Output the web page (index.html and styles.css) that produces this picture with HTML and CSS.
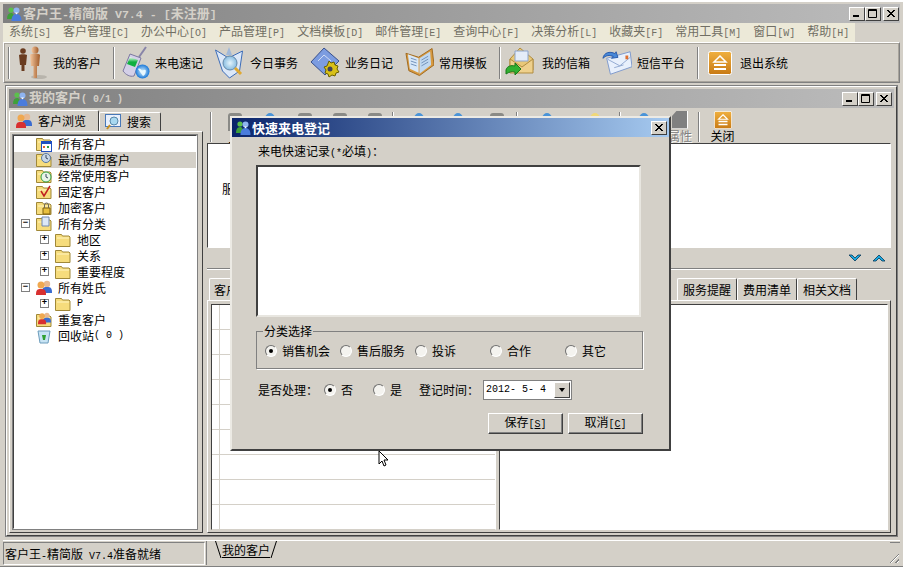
FILE: index.html
```html
<!DOCTYPE html>
<html lang="zh-CN">
<head>
    <meta charset="UTF-8">
    <title>客户王-精简版</title>
    <link rel="stylesheet" href="styles.css">
</head>
<body>
<svg class="sprite" xmlns="http://www.w3.org/2000/svg">
    <defs>
        <linearGradient id="bronze" x1="0" x2="1"><stop offset="0" stop-color="#f4c8a0"/><stop offset="1" stop-color="#a05a28"/></linearGradient>
        <linearGradient id="exitg" x1="0" x2="0" y1="0" y2="1"><stop offset="0" stop-color="#f0b040"/><stop offset="1" stop-color="#c87a14"/></linearGradient>
        <linearGradient id="lcd" x1="0" x2="0" y1="0" y2="1"><stop offset="0" stop-color="#f0fff0"/><stop offset="0.500" stop-color="#10b040"/></linearGradient>
        <radialGradient id="globe"><stop offset="0" stop-color="#d8f4ff"/><stop offset="1" stop-color="#1a78d8"/></radialGradient>
        <radialGradient id="lens"><stop offset="0" stop-color="#e4f4fc"/><stop offset="1" stop-color="#88bce0"/></radialGradient>
    </defs>
    <symbol id="msn" viewBox="0 0 16 16">
        <circle cx="5" cy="4" r="2.600" fill="#5cc04c"/><path d="M1 13c0-4 1.500-6 4-6s3 2 3 6z" fill="#3ea03a"/>
        <circle cx="10.500" cy="4.500" r="3" fill="#8fb4f0"/><path d="M5.500 15c0-5 2-7 5-7s5 2 5 7z" fill="#4a7cdc"/>
        <path d="M9 6.500h3l-1.500 2z" fill="#fff"/>
    </symbol>
    <symbol id="figures" viewBox="0 0 32 34">
        <ellipse cx="23" cy="31" rx="8" ry="2" fill="#b8b4ac"/>
        <circle cx="7" cy="5" r="2.800" fill="#6a3c20"/><path d="M3 9c1-1 7-1 8 0l-1 10H8.500v6h-3v-6H4z" fill="#6a3c20"/>
        <circle cx="19" cy="4" r="3.500" fill="url(#bronze)"/><path d="M14 9c1-2 9-2 10 0l-1 11h-2v12h-3.500V20h-2.500z" fill="url(#bronze)"/>
    </symbol>
    <symbol id="phone" viewBox="0 0 28 32">
        <path d="M1 24 8 7l11 4-7 18c-4 1-8-1-11-5z" fill="#d4d0e8" stroke="#7c78a0"/><path d="M8 10l8 3-3 7-8-3z" fill="url(#lcd)"/>
        <path d="M17 10l7-10" stroke="#8884a8" stroke-width="2"/>
        <circle cx="20.500" cy="24.500" r="7" fill="url(#globe)"/><path d="M16 22c3-2 3 3 6 1s2 5-1 6" fill="#e8f8ff"/>
    </symbol>
    <symbol id="task" viewBox="0 0 30 32">
        <path d="M0.500 3l13 8 14-7-3 20-10 7-7-7z" fill="#dce8f8" stroke="#3c6cb8"/>
        <path d="M14 0l3 8h-6z" fill="#a0b8d8"/>
        <circle cx="15" cy="16" r="7" fill="url(#lens)" stroke="#6488a8"/>
        <path d="M20 21l6 6" stroke="#e0a830" stroke-width="3"/>
    </symbol>
    <symbol id="diary" viewBox="0 0 30 32">
        <path d="M1 15 14 1l15 13-14 14z" fill="#7c9ce0" stroke="#38508c"/>
        <path d="M8 14l6-6 7 6" fill="none" stroke="#d0dcf4"/>
        <path d="M19 14l2 2 3-1 1 3 3 1-1 3 2 3-3 1-1 3-3-1-3 2-1-3-3-1 1-3-2-3 3-1z" fill="#d8c018" stroke="#6a6000"/>
        <circle cx="20" cy="22" r="2.500" fill="#445"/>
    </symbol>
    <symbol id="book" viewBox="0 0 30 30">
        <path d="M1 5l13 4 14-9 2 17-15 11L4 23z" fill="#d89a40" stroke="#a06a20"/>
        <path d="M3 6l11 4v15L5 21z" fill="#d8e8f8"/><path d="M15 10 26 3l1 14-12 9z" fill="#c0d8f0"/>
        <path d="M6 10l6 2M6 13l6 2M6 16l6 2M17 12l7-4M17 15l7-4M17 18l7-4" stroke="#7090b8"/>
    </symbol>
    <symbol id="mailin" viewBox="0 0 32 32">
        <path d="M5 12 15 1l13 11v11H5z" fill="#e8c878" stroke="#b08c40"/>
        <path d="M10 4h13v10H10z" fill="#e4ecf8" stroke="#8ca4cc"/>
        <path d="M5 12l12 8 11-8v14H5z" fill="#eed08c" stroke="#b08c40"/>
        <path d="M1 23c1-4 5-5 9-4v-3l6 6-6 6v-3c-3-1-6 0-9 2z" fill="#30b030" stroke="#187818"/>
    </symbol>
    <symbol id="mailout" viewBox="0 0 32 28">
        <path d="M5 9l25-7 2 16-23 8z" fill="#e8f0fc" stroke="#7c98cc"/>
        <path d="M6 10l13 7 11-9M13 19l10-3" fill="none" stroke="#90a8d0"/>
        <path d="M25 6h3v4h-3z" fill="#e07030"/>
        <path d="M1 9c1-6 7-8 13-5l1-2 2 6-7 1 2-2c-4-2-8-1-11 2z" fill="#4888d8" stroke="#2858a8"/>
    </symbol>
    <symbol id="exit" viewBox="0 0 24 24">
        <rect x="0.500" y="0.500" width="23" height="23" rx="2" fill="url(#exitg)" stroke="#fff"/>
        <path d="M12 5l6 6H6z" fill="none" stroke="#fff" stroke-width="1.500"/><path d="M6 14h12M6 18h12" stroke="#fff" stroke-width="2"/>
    </symbol>
    <symbol id="folder" viewBox="0 0 16 16">
        <path d="M0.500 4V2.500h6l1 1.500h6.500l1 1v9.500H0.500z" fill="#f6dc7c" stroke="#a08838"/><path d="M2 6h12" stroke="#fff4c0"/>
    </symbol>
    <symbol id="people" viewBox="0 0 16 16">
        <circle cx="11" cy="4" r="3.200" fill="#e8b890"/><path d="M6 13c0-5 1-6 5-6s5 1 5 6z" fill="#3a6cd0"/>
        <circle cx="5" cy="5" r="3.500" fill="#f0a850"/><path d="M0 15c0-5 1-6 5-6s5 1 5 6z" fill="#d83030"/>
    </symbol>
    <symbol id="bin" viewBox="0 0 16 16">
        <path d="M2 3h12l-2 12H4z" fill="#c8e4f4" stroke="#6c9cbc"/><path d="M6 7h4l-1 5H7z" fill="#30a030"/>
    </symbol>
    <symbol id="magnify" viewBox="0 0 16 16">
        <rect x="0.500" y="0.500" width="15" height="12" fill="#e8f0fc" stroke="#4878b8"/>
        <circle cx="9" cy="7" r="4" fill="#a8d8f0" stroke="#5888a8"/><path d="M5 11l-3 4" stroke="#c89020" stroke-width="2"/>
    </symbol>
    <symbol id="min" viewBox="0 0 10 9"><path d="M1 6h6v2H1z"/></symbol>
    <symbol id="max" viewBox="0 0 10 9"><path d="M0.500 0.500h8v8h-8zM1 1.500h7" fill="none" stroke="#000"/></symbol>
    <symbol id="close" viewBox="0 0 10 9"><path d="M1 1l7 7M2 1l7 7M8 1 1 8M9 1 2 8" stroke="#000" fill="none"/></symbol>
</svg>

<div class="app">
    <div class="titlebar">
        <svg class="title-icon"><use href="#msn"/></svg>
        <span class="title-text">客户王<i class="lat">-</i>精简版<i class="lat"> V7.4 - [</i>未注册<i class="lat">]</i></span>
        <div class="win-btns">
            <span class="win-btn"><svg><use href="#min"/></svg></span>
            <span class="win-btn"><svg><use href="#max"/></svg></span>
            <span class="win-btn gap"><svg><use href="#close"/></svg></span>
        </div>
    </div>

    <div class="menubar">
        <span class="menu-item">系统<i class="lat">[S]</i></span>
        <span class="menu-item">客户管理<i class="lat">[C]</i></span>
        <span class="menu-item">办公中心<i class="lat">[O]</i></span>
        <span class="menu-item">产品管理<i class="lat">[P]</i></span>
        <span class="menu-item">文档模板<i class="lat">[D]</i></span>
        <span class="menu-item">邮件管理<i class="lat">[E]</i></span>
        <span class="menu-item">查询中心<i class="lat">[F]</i></span>
        <span class="menu-item">决策分析<i class="lat">[L]</i></span>
        <span class="menu-item">收藏夹<i class="lat">[F]</i></span>
        <span class="menu-item">常用工具<i class="lat">[M]</i></span>
        <span class="menu-item">窗口<i class="lat">[W]</i></span>
        <span class="menu-item">帮助<i class="lat">[H]</i></span>
    </div>

    <div class="toolbar">
        <span class="sep grip"></span>
        <div class="tool"><svg class="w32"><use href="#figures"/></svg>我的客户</div>
        <span class="sep"></span>
        <div class="tool"><svg class="w28"><use href="#phone"/></svg>来电速记</div>
        <div class="tool"><svg class="w30"><use href="#task"/></svg>今日事务</div>
        <div class="tool"><svg class="w30"><use href="#diary"/></svg>业务日记</div>
        <div class="tool"><svg class="w29"><use href="#book"/></svg>常用模板</div>
        <span class="sep sep-tight"></span>
        <div class="tool"><svg class="w32"><use href="#mailin"/></svg>我的信箱</div>
        <div class="tool"><svg class="w30"><use href="#mailout"/></svg>短信平台</div>
        <span class="sep sep-wide"></span>
        <div class="tool tool-exit"><svg class="w24"><use href="#exit"/></svg>退出系统</div>
    </div>

    <div class="child">
        <div class="titlebar child-title">
            <svg class="title-icon"><use href="#msn"/></svg>
            <span class="title-text">我的客户<i class="lat">( 0/1 )</i></span>
            <div class="win-btns">
                <span class="win-btn"><svg><use href="#min"/></svg></span>
                <span class="win-btn"><svg><use href="#max"/></svg></span>
                <span class="win-btn gap"><svg><use href="#close"/></svg></span>
            </div>
        </div>

        <div class="child-body">
            <div class="left">
                <div class="tabs">
                    <span class="tab active"><svg class="tab-icon"><use href="#people"/></svg>客户浏览</span>
                    <span class="tab"><svg class="tab-icon"><use href="#magnify"/></svg>搜索</span>
                </div>
                <div class="tab-page">
                    <div class="tree">
                        <div class="row"><span class="twisty none"></span><svg class="node"><use href="#folder"/><rect x="5.500" y="5.500" width="10" height="10" fill="#fff" stroke="#2050c0"/><path d="M6 6h9v2H6z" fill="#2050c0"/><path d="M7 10h2v2H7z" fill="#e06030"/><path d="M11 10h2v2h-2z" fill="#30a040"/></svg>所有客户</div>
                        <div class="row selected"><span class="twisty none"></span><svg class="node"><use href="#folder"/><circle cx="10" cy="6" r="4.500" fill="#c8d8e8" stroke="#5878a0"/><path d="M10 3v3l2 1" fill="none" stroke="#384860"/></svg>最近使用客户</div>
                        <div class="row"><span class="twisty none"></span><svg class="node"><use href="#folder"/><circle cx="10" cy="9" r="5" fill="#e8f4e8" stroke="#30a040"/><path d="M10 6v3l2 1" fill="none" stroke="#384860"/></svg>经常使用客户</div>
                        <div class="row"><span class="twisty none"></span><svg class="node"><use href="#folder"/><path d="M5 7l3 5 6-10" fill="none" stroke="#c02020" stroke-width="1.500"/></svg>固定客户</div>
                        <div class="row"><span class="twisty none"></span><svg class="node"><use href="#folder"/><path d="M7 8h7v6H7z" fill="#e8c040" stroke="#806010"/><path d="M8.500 8V5a2 2 0 0 1 4 0v3" fill="none" stroke="#706858"/></svg>加密客户</div>
                        <div class="row"><span class="twisty">−</span><svg class="node"><use href="#folder"/><path d="M6 1h7v9H6z" fill="#dce8f8" stroke="#7088b0"/></svg>所有分类</div>
                        <div class="row sub"><span class="twisty">+</span><svg class="node"><use href="#folder"/></svg>地区</div>
                        <div class="row sub"><span class="twisty">+</span><svg class="node"><use href="#folder"/></svg>关系</div>
                        <div class="row sub"><span class="twisty">+</span><svg class="node"><use href="#folder"/></svg>重要程度</div>
                        <div class="row"><span class="twisty">−</span><svg class="node"><use href="#people"/></svg>所有姓氏</div>
                        <div class="row sub"><span class="twisty">+</span><svg class="node"><use href="#folder"/></svg><i class="lat">P</i></div>
                        <div class="row"><span class="twisty none"></span><svg class="node"><use href="#folder"/><use href="#people" x="2" y="0" width="13" height="13"/></svg>重复客户</div>
                        <div class="row"><span class="twisty none"></span><svg class="node"><use href="#bin"/></svg>回收站<i class="lat">( 0 )</i></div>
                    </div>
                </div>
            </div>

            <div class="right">
                <div class="subtoolbar">
                    <span class="sep grip"></span>
                    <span class="subtool"><i class="mini mini-grey"></i>上</span>
                    <span class="subtool"><i class="mini mini-blue"></i></span>
                    <span class="subtool"><i class="mini mini-grey"></i></span>
                    <span class="subtool"><i class="mini mini-grey"></i></span>
                    <span class="subtool"><i class="mini mini-grey"></i></span>
                    <span class="sep"></span>
                    <span class="subtool w40"><i class="mini mini-blue"></i></span>
                    <span class="subtool w40"><i class="mini mini-blue"></i></span>
                    <span class="subtool w40"><i class="mini mini-grey"></i></span>
                    <span class="sep"></span>
                    <span class="subtool w48"><i class="mini mini-blue"></i></span>
                    <span class="subtool w48"><i class="mini mini-yellow"></i></span>
                    <span class="sep"></span>
                    <span class="subtool w37"><i class="mini mini-blue"></i></span>
                    <span class="subtool w37 disabled"><i class="mini mini-doc"></i>属性</span>
                    <span class="sep"></span>
                    <span class="subtool"><svg class="mini-exit"><use href="#exit"/></svg>关闭</span>
                </div>

                <div class="info-pane">服务</div>

                <div class="collapse-bar">
                    <svg class="chevron" viewBox="0 0 14 8"><path d="M1 1h3l3 3 3-3h3L7 7z" fill="#18a8e0" stroke="#083858" stroke-width="0.800"/></svg>
                    <svg class="chevron" viewBox="0 0 14 8"><path d="M1 7h3l3-3 3 3h3L7 1z" fill="#18a8e0" stroke="#083858" stroke-width="0.800"/></svg>
                </div>

                <div class="tabs lower-tabs">
                    <span class="tab active first">客户</span>
                    <span class="tabs-fill"></span>
                    <span class="tab">服务提醒</span>
                    <span class="tab">费用清单</span>
                    <span class="tab">相关文档</span>
                </div>
                <div class="lower-page">
                    <div class="grid"></div>
                    <div class="detail"></div>
                </div>
            </div>
        </div>
    </div>

    <div class="statusbar">
        <div class="status-text">客户王<i class="lat">-</i>精简版<i class="lat"> V7.4</i>准备就绪</div>
        <div class="status-tabs">
            <div class="mdi-tab">
                <svg class="slash" viewBox="0 0 7 17"><path d="M0.500 0 6 17" stroke="#000" fill="none"/></svg>
                <span class="mdi-label">我的客户</span>
                <svg class="slash" viewBox="0 0 7 17"><path d="M6.500 0 1 17" stroke="#000" fill="none"/></svg>
            </div>
            <span class="size-grip"></span>
        </div>
    </div>
</div>

<div class="dialog">
    <div class="dialog-title">
        <svg class="title-icon"><use href="#msn"/></svg>
        <span class="title-text">快速来电登记</span>
        <span class="win-btn"><svg><use href="#close"/></svg></span>
    </div>
    <div class="dialog-body">
        <div class="field-label">来电快速记录<i class="lat">(*</i>必填<i class="lat">)</i>：</div>
        <textarea class="memo"></textarea>
        <fieldset class="group">
            <legend>分类选择</legend>
            <div class="radio-row">
                <label class="radio-item"><span class="radio on"></span>销售机会</label>
                <label class="radio-item"><span class="radio"></span>售后服务</label>
                <label class="radio-item"><span class="radio"></span>投诉</label>
                <label class="radio-item"><span class="radio"></span>合作</label>
                <label class="radio-item"><span class="radio"></span>其它</label>
            </div>
        </fieldset>
        <div class="state-row">
            <span class="state-label">是否处理：</span>
            <label class="radio-item no"><span class="radio on"></span>否</label>
            <label class="radio-item yes"><span class="radio"></span>是</label>
            <span class="state-label">登记时间：</span>
            <div class="combo">
                <span class="combo-value">2012- 5- 4</span>
                <span class="combo-btn"></span>
            </div>
        </div>
        <div class="actions">
            <button class="btn">保存<i class="lat">[<u>S</u>]</i></button>
            <button class="btn">取消<i class="lat">[<u>C</u>]</i></button>
        </div>
    </div>
</div>

<svg class="cursor" viewBox="0 0 12 18">
    <path d="M1 1v13l3-3 2 5 2-1-2-5h4z" fill="#fff" stroke="#000"/>
</svg>
</body>
</html>
```

FILE: styles.css
```css
* {
    box-sizing: border-box;
}
html, body {
    margin: 0;
    height: 100%;
    overflow: hidden;
}
body {
    position: relative;
    font: 12px/16px "Noto Sans CJK SC", sans-serif;
    color: #000;
    background-color: #d4d0c8;
}
i {
    font-style: normal;
}
.lat {
    font-family: "Liberation Mono", monospace;
    font-size: 10px;
    white-space: pre;
}
.sprite {
    position: absolute;
    width: 0;
    height: 0;
}

.app {
    width: 903px;
    height: 567px;
    padding: 2px 3px 1px;
    display: flex;
    flex-direction: column;
    background-color: #d4d0c8;
    border-top: 2px solid #fff;
    border-bottom: 1px solid #808080;
}

/* title bars */
.titlebar {
    height: 19px;
    flex: none;
    display: flex;
    align-items: center;
    padding-left: 3px;
    background: linear-gradient(to right, #808080, #bcbcbc);
    color: #d4d0c8;
}
.title-icon {
    width: 16px;
    height: 16px;
    margin-right: 1px;
    flex: none;
}
.title-text {
    font-size: 13px;
    font-weight: 700;
    white-space: pre;
}
.title-text .lat {
    font-size: 11.600px;
    font-weight: 700;
}
.win-btns {
    margin-left: auto;
    display: flex;
    padding-right: 1px;
}
.win-btn {
    width: 16px;
    height: 14px;
    display: flex;
    align-items: center;
    justify-content: center;
    background-color: #d4d0c8;
    border: 1px solid;
    border-color: #fff #404040 #404040 #fff;
}
.win-btn.gap {
    margin-left: 2px;
}
.win-btn svg {
    width: 10px;
    height: 9px;
}

/* menu */
.menubar {
    height: 19px;
    flex: none;
    display: flex;
    align-items: center;
    width: 852px;
    background-color: #ece9d8;
    color: #716f64;
}
.menu-item {
    padding: 0 6px;
    white-space: nowrap;
}

/* main toolbar */
.toolbar {
    height: 41px;
    flex: none;
    display: flex;
    align-items: center;
    padding-left: 4px;
    border: 1px solid;
    border-color: #fff #808080 #808080 #fff;
    box-shadow: 0 0 0 1px #a8a49c inset;
}
.sep {
    width: 2px;
    height: 32px;
    flex: none;
    border-left: 1px solid #808080;
    border-right: 1px solid #fff;
    margin-right: 7px;
}
.sep.grip {
    margin-right: 6px;
}
.sep.sep-tight {
    margin-right: 4px;
}
.sep.sep-wide {
    margin-right: 9px;
}
.tool {
    display: flex;
    align-items: center;
    gap: 5px;
    margin-right: 12px;
    white-space: nowrap;
}
.tool svg {
    height: 34px;
    flex: none;
}
.tool-exit {
    gap: 8px;
}
.w24 { width: 24px; }
.tool svg.w24 { height: 24px; }
.w28 { width: 28px; }
.w29 { width: 29px; }
.w30 { width: 30px; }
.w32 { width: 32px; }

/* child window */
.child {
    flex: 1;
    min-height: 0;
    margin: 3px 3px 4px;
    padding: 2px;
    display: flex;
    flex-direction: column;
    border: 1px solid #404040;
    border-top-color: #fff;
    border-left-color: #fff;
    box-shadow: 0 0 0 1px #808080;
}
.child-title {
    height: 19px;
}
.child-title .win-btns {
    padding-right: 2px;
}
.child-title .lat {
    font-size: 10px;
}
.child-body {
    flex: 1;
    min-height: 0;
    display: flex;
    padding-top: 2px;
}

/* left panel */
.left {
    width: 194px;
    flex: none;
    display: flex;
    flex-direction: column;
}
.tabs {
    height: 21px;
    flex: none;
    display: flex;
    align-items: flex-end;
}
.tab {
    height: 19px;
    display: flex;
    align-items: center;
    justify-content: center;
    white-space: nowrap;
    border: 1px solid;
    border-bottom: 0;
    border-color: #fff #404040 transparent #fff;
    border-radius: 2px 2px 0 0;
}
.left .tab {
    width: 62px;
    gap: 6px;
    justify-content: flex-start;
    padding-left: 5px;
}
.left .tab.active {
    width: 90px;
    height: 21px;
    padding-left: 6px;
}
.tab-icon {
    width: 16px;
    height: 16px;
}
.tab-page {
    flex: 1;
    min-height: 0;
    padding: 3px 5px 3px 3px;
    border: 1px solid;
    border-color: #fff #404040 #404040 #fff;
}
.tree {
    height: 100%;
    background-color: #fff;
    border: 1px solid;
    border-color: #404040 #fff #fff #404040;
    outline: 1px solid #808080;
}
.row {
    height: 16px;
    display: flex;
    align-items: center;
    padding: 0 0 1px 7px;
    white-space: nowrap;
}
.row.sub {
    padding-left: 26px;
}
.row.selected {
    background-color: #d4d0c8;
}
.twisty {
    width: 9px;
    height: 9px;
    flex: none;
    margin-right: 6px;
    display: flex;
    align-items: center;
    justify-content: center;
    border: 1px solid #808080;
    font: 9px/7px "Liberation Mono", monospace;
    font-weight: 700;
}
.twisty.none {
    visibility: hidden;
}
.node {
    width: 16px;
    height: 16px;
    flex: none;
    margin-right: 6px;
}

/* right panel */
.right {
    flex: 1;
    min-width: 0;
    margin: 0 3px 0 4px;
    display: flex;
    flex-direction: column;
}
.subtoolbar {
    height: 33px;
    flex: none;
    display: flex;
    align-items: center;
    padding-left: 3px;
}
.subtoolbar .sep {
    height: 30px;
    margin-right: 5px;
}
.subtool {
    width: 35px;
    height: 32px;
    flex: none;
    display: flex;
    flex-direction: column;
    align-items: center;
    justify-content: flex-start;
    font-size: 12px;
    line-height: 14px;
}
.subtool.w37 { width: 36px; }
.subtool.w40 { width: 39px; }
.subtool.w48 { width: 48px; }
.subtool.disabled {
    color: #808080;
    text-shadow: 1px 1px 0 #fff;
}
.mini {
    width: 16px;
    height: 18px;
    flex: none;
    margin-top: 2px;
}
.mini-grey {
    width: 14px;
    background-color: #8a8a86;
    border-radius: 3px 3px 0 0;
}
.mini-blue {
    background-color: #4a94d8;
    border-radius: 50% 50% 0 0 / 100% 100% 0 0;
}
.mini-yellow {
    background-color: #f0d878;
    border-radius: 50% 50% 0 0 / 100% 100% 0 0;
}
.mini-doc {
    margin-top: 0;
    background-color: #808080;
    border: 1px solid #fff;
    border-width: 0 1px 1px 0;
    clip-path: polygon(30% 0, 100% 0, 100% 100%, 0 100%, 0 30%);
}
.mini-exit {
    width: 18px;
    height: 18px;
    flex: none;
}
.info-pane {
    height: 105px;
    flex: none;
    padding: 37px 0 0 14px;
    background-color: #fff;
    border: 1px solid;
    border-color: #404040 #fff #fff #404040;
}
.collapse-bar {
    height: 21px;
    flex: none;
    display: flex;
    align-items: center;
    justify-content: flex-end;
    gap: 10px;
    padding-right: 5px;
    border-bottom: 1px solid #808080;
    box-shadow: 0 1px 0 #fff;
}
.chevron {
    width: 14px;
    height: 8px;
}
.lower-tabs {
    height: 31px;
    margin-right: 34px;
}
.lower-tabs .tab {
    width: 60px;
    height: 22px;
}
.lower-tabs .tab.first {
    width: 100px;
    justify-content: flex-start;
    padding-left: 4px;
    margin-left: 2px;
}
.tabs-fill {
    flex: 1;
}
.lower-page {
    flex: 1;
    min-height: 0;
    display: flex;
    padding: 3px 2px 2px 3px;
    border: 1px solid;
    border-color: #fff #404040 #404040 #fff;
}
.grid {
    width: 285px;
    flex: none;
    border: 1px solid;
    border-color: #404040 #fff #d4d0c8 #404040;
    background-color: #fff;
    background-image:
        linear-gradient(to right, transparent 7px, #d4d0c8 7px, #d4d0c8 8px, transparent 8px),
        repeating-linear-gradient(to bottom, transparent 0, transparent 24px, #d4d0c8 24px, #d4d0c8 25px);
}
.detail {
    flex: 1;
    margin-left: 3px;
    background-color: #fff;
    border: 1px solid;
    border-color: #404040 #fff #fff #404040;
}

/* status bar */
.statusbar {
    height: 25px;
    flex: none;
    display: flex;
    border-top: 1px solid #fff;
}
.status-text {
    width: 202px;
    flex: none;
    margin-top: 1px;
    padding: 3px 1px;
    border: 1px solid;
    border-color: #808080 #fff #fff #808080;
    white-space: pre;
}
.status-tabs {
    flex: 1;
    display: flex;
    align-items: flex-start;
    padding-left: 8px;
    border-left: 1px solid #808080;
    margin-left: 1px;
    position: relative;
}
.mdi-tab {
    height: 18px;
    display: flex;
}
.slash {
    width: 7px;
    height: 17px;
    flex: none;
}
.mdi-label {
    height: 17px;
    line-height: 17px;
    border-bottom: 1px solid #000;
}
.size-grip {
    position: absolute;
    right: 1px;
    bottom: 2px;
    width: 12px;
    height: 12px;
    background: repeating-linear-gradient(135deg, transparent 0, transparent 2px, #808080 2px, #808080 3px, #fff 3px, #fff 4px);
    clip-path: polygon(100% 0, 100% 100%, 0 100%);
}
.status-tabs::after {
    content: "";
    position: absolute;
    right: 0;
    top: 1px;
    width: 10px;
    border-top: 1px solid #808080;
}

/* modal dialog */
.dialog {
    position: absolute;
    left: 230px;
    top: 116px;
    width: 441px;
    height: 335px;
    display: flex;
    flex-direction: column;
    background-color: #d4d0c8;
    border: 2px solid;
    border-color: #eceae4 #404040 #404040 #eceae4;
}
.dialog-title {
    height: 19px;
    flex: none;
    display: flex;
    align-items: center;
    padding: 0 2px 0 3px;
    color: #fff;
    background: linear-gradient(to right, #0a246a, #a6caf0);
}
.dialog-title .win-btn {
    margin-left: auto;
}
.dialog-title .title-icon {
    margin-right: 1px;
}
.dialog-body {
    flex: 1;
    padding: 6px 26px 0 24px;
}
.field-label {
    padding-left: 2px;
    height: 16px;
}
.memo {
    display: block;
    width: 385px;
    height: 152px;
    margin: 6px 0 6px;
    padding: 0;
    resize: none;
    background-color: #fff;
    border: 2px solid;
    border-color: #404040 #e8e6e0 #e8e6e0 #404040;
    outline: none;
}
.group {
    width: 387px;
    height: 46px;
    margin: 0;
    padding: 4px 0 0 8px;
    border: 1px solid #808080;
    box-shadow: 1px 1px 0 #fff;
}
.group legend {
    padding: 0 1px;
    margin-left: -2px;
    height: 16px;
}
.radio-row {
    display: grid;
    grid-template-columns: repeat(5, 75px);
}
.radio-item {
    display: flex;
    align-items: center;
    gap: 5px;
    white-space: nowrap;
}
.radio {
    width: 12px;
    height: 12px;
    flex: none;
    display: flex;
    align-items: center;
    justify-content: center;
    border-radius: 50%;
    background-color: #f4f3ef;
    border: 1px solid;
    border-color: #707070 #fff #fff #707070;
}
.radio.on::after {
    content: "";
    width: 4px;
    height: 4px;
    border-radius: 50%;
    background-color: #000;
}
.state-row {
    display: flex;
    align-items: center;
    height: 20px;
    margin-top: 11px;
    padding-left: 2px;
}
.state-label {
    white-space: nowrap;
}
.radio-item.no {
    margin-left: 6px;
    width: 49px;
}
.radio-item.yes {
    width: 46px;
}
.combo {
    width: 89px;
    height: 20px;
    margin-left: 4px;
    display: flex;
    align-items: center;
    justify-content: space-between;
    padding-left: 2px;
    background-color: #fff;
    border: 1px solid;
    border-color: #404040 #fff #fff #404040;
    outline: 1px solid #808080;
    outline-offset: -1px;
}
.combo-value {
    font-family: "Liberation Mono", monospace;
    font-size: 10px;
    white-space: pre;
    color: #000;
}
.combo-btn {
    width: 16px;
    height: 16px;
    margin-right: 1px;
    display: flex;
    align-items: center;
    justify-content: center;
    background-color: #d4d0c8;
    border: 1px solid;
    border-color: #fff #404040 #404040 #fff;
}
.combo-btn::after {
    content: "";
    border: 3.500px solid transparent;
    border-top: 4px solid #000;
    border-bottom: 0;
}
.actions {
    display: flex;
    justify-content: flex-end;
    gap: 5px;
    margin-top: 13px;
}
.btn {
    width: 75px;
    height: 21px;
    padding: 0;
    font: inherit;
    background-color: #d4d0c8;
    border: 1px solid;
    border-color: #fff #404040 #404040 #fff;
    box-shadow: inset -1px -1px 0 #808080;
}

.cursor {
    position: absolute;
    left: 378px;
    top: 450px;
    width: 12px;
    height: 18px;
}
```
